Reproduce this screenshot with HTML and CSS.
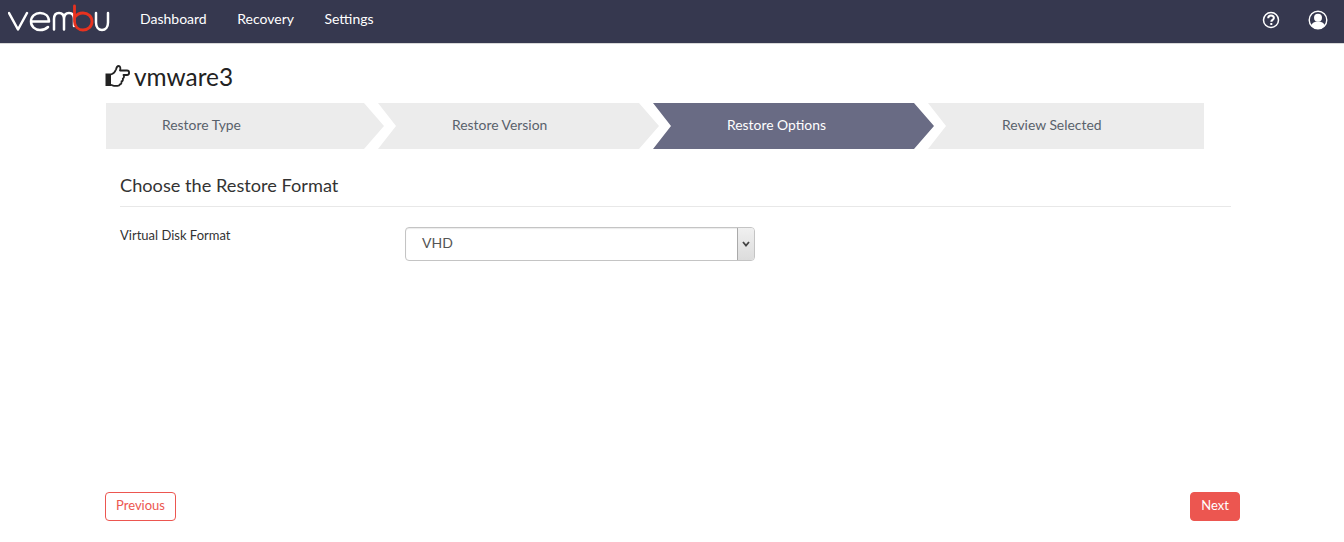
FILE: index.html
```html
<!DOCTYPE html>
<html lang="en">
<head>
<meta charset="utf-8">
<title>Restore Options</title>
<link rel="stylesheet" href="styles.css">
</head>
<body>
<header class="topbar">
  <svg class="logo" width="102" height="32" viewBox="0 0 102 32" fill="none" stroke-linecap="round" stroke-linejoin="round">
    <path d="M1 9 L10 25.500 L19 9" stroke="#fff" stroke-width="2.500"/>
    <path d="M23 17.500 H41 C41 12 37 9 32 9 C27 9 23 12.500 23 17.500 C23 22.500 27 26 32 26 C35.500 26 38 25 40 23" stroke="#fff" stroke-width="2.500"/>
    <path d="M46 25.500 V15 C46 11 48 9 51 9 C54 9 56 11 56 15 V25.500 M56 15 C56 11 58 9 61 9 C64 9 66 11 66 15 V22" stroke="#fff" stroke-width="2.500"/>
    <path d="M66.500 2 V17.500 C66.500 22.500 70 26 75 26 C80 26 84 22.500 84 17.500 C84 12.500 80 9 75 9 C71.500 9 68.500 10.500 66.500 13.500" stroke="#e8321f" stroke-width="2.800"/>
    <path d="M88 9 V18.500 C88 23 90.500 26 94 26 C97.500 26 100 23 100 18.500 V9" stroke="#fff" stroke-width="2.500"/>
  </svg>
  <nav class="nav">
    <a class="nav-link">Dashboard</a>
    <a class="nav-link">Recovery</a>
    <a class="nav-link">Settings</a>
  </nav>
  <div class="top-icons">
    <svg class="icon-help" width="18" height="18" viewBox="0 0 18 18" fill="none">
      <circle cx="9" cy="9" r="7.500" stroke="#fff" stroke-width="1.500"/>
      <path d="M6.200 7.200 C6.200 5.400 7.500 4.500 9 4.500 C10.700 4.500 11.900 5.500 11.900 7 C11.900 8.800 9.300 9 9.300 10.800" stroke="#fff" stroke-width="2"/>
      <rect x="8.300" y="12" width="2" height="2" fill="#fff"/>
    </svg>
    <svg class="icon-user" width="20" height="20" viewBox="0 0 20 20" fill="none">
      <circle cx="10" cy="10" r="8.800" stroke="#fff" stroke-width="1.400"/>
      <circle cx="10" cy="7.800" r="4" fill="#fff"/>
      <path d="M3.200 15.500 C4 12.800 6.500 11.500 10 11.500 C13.500 11.500 16 12.800 16.800 15.500 C15 18 12.500 19 10 19 C7.500 19 5 18 3.200 15.500 Z" fill="#fff"/>
    </svg>
  </div>
</header>
<main class="page">
  <h1 class="title">
    <svg class="hand" width="25" height="22" viewBox="0 0 25 22" fill="none">
      <path d="M0.500 8.500 H6 V21 H0.500 Z" fill="#222"/>
      <path d="M6 9.500 C8 9 10 7 11 4.500 C11.500 2.500 12 1 13.500 1 C15.300 1 15.800 3 15 5.500 H22 C24.800 5.500 24.800 10 22 10 H18.500 C19.500 11.500 19 13 17.800 13.500 C18.300 15 17.500 16.300 16.500 16.500 C16.800 18 16 19.300 14.800 19.500 C14.500 20.500 13.500 20.800 12.500 20.800 H9 C7.500 20.800 7 19.800 6 19.800" stroke="#222" stroke-width="1.800" stroke-linejoin="round"/>
    </svg>
    <span>vmware3</span>
  </h1>
  <ol class="steps">
    <li class="step step-first">Restore Type</li>
    <li class="step">Restore Version</li>
    <li class="step step-active">Restore Options</li>
    <li class="step step-last">Review Selected</li>
  </ol>
  <section class="panel">
    <h2 class="panel-title">Choose the Restore Format</h2>
    <div class="field">
      <label class="field-label">Virtual Disk Format</label>
      <div class="select">
        <span class="select-value">VHD</span>
        <span class="select-btn">
          <svg width="8" height="6" viewBox="0 0 8 6" fill="none"><path d="M1 1 L4 4.500 L7 1" stroke="#444" stroke-width="1.800"/></svg>
        </span>
      </div>
    </div>
  </section>
  <footer class="actions">
    <button class="btn btn-outline">Previous</button>
    <button class="btn btn-solid">Next</button>
  </footer>
</main>
</body>
</html>
```
FILE: styles.css
```css
* { box-sizing: border-box; }
html, body { margin: 0; height: 100%; }
body {
  font-family: Lato, "Liberation Sans", sans-serif;
  background: #fff;
  color: #333;
  overflow: hidden;
}
.topbar {
  display: flex;
  align-items: center;
  height: 44px;
  background: #36384f;
  border-bottom: 1px solid #d8d8d8;
  padding: 0 16px 0 8px;
}
.logo { flex: none; margin-top: -4px; }
.nav { display: flex; gap: 30.500px; margin-left: 30px; }
.nav-link { color: #fff; font-size: 14px; line-height: 20px; margin-top: -6px; }
.top-icons { display: flex; align-items: center; gap: 28px; margin-left: auto; margin-top: -4px; }
.page { padding: 0 104px 0 105px; }
.title {
  display: flex;
  align-items: center;
  gap: 4px;
  height: 36px;
  margin: 14px 0 9px;
  font-size: 24.400px;
  font-weight: 400;
  color: #222;
}
.hand { flex: none; }
.steps {
  display: flex;
  list-style: none;
  margin: 0 0 0 1px;
  padding: 0;
  width: 1098px;
}
.step {
  width: 281px;
  height: 46px;
  margin-right: -6px;
  padding-left: 74px;
  background: #ececec;
  color: #59616b;
  font-size: 13.900px;
  line-height: 44px;
  clip-path: polygon(0 0, 261px 0, 100% 50%, 261px 100%, 0 100%, 18px 50%);
}
.step-first {
  width: 278px;
  padding-left: 56px;
  clip-path: polygon(0 0, 258px 0, 100% 50%, 258px 100%, 0 100%);
}
.step-active { background: #696b84; color: #fff; }
.step-last {
  width: 276px;
  margin-right: 0;
  clip-path: polygon(0 0, 100% 0, 100% 100%, 0 100%, 18px 50%);
}
.panel { margin: 0 9px 0 15px; }
.panel-title {
  margin: 0;
  height: 58px;
  padding-top: 25px;
  font-size: 18.200px;
  line-height: 22px;
  font-weight: 400;
  color: #333;
  border-bottom: 1px solid #e8e8e8;
}
.field { display: flex; align-items: flex-start; margin-top: 20px; }
.field-label { width: 285px; font-size: 13px; line-height: 16px; color: #333; }
.select {
  display: flex;
  justify-content: space-between;
  width: 350px;
  height: 34px;
  border: 1px solid #c4c4c4;
  border-radius: 4px;
  box-shadow: inset 0 1px 1px rgba(0,0,0,.08);
  overflow: hidden;
}
.select-value { padding-left: 16px; font-size: 14px; line-height: 29px; color: #555; letter-spacing: .1px; }
.select-btn {
  display: flex;
  align-items: center;
  justify-content: center;
  width: 17px;
  background: linear-gradient(#f0f0f0, #dcdcdc);
  border-left: 1px solid #aaa;
}
.actions {
  display: flex;
  justify-content: space-between;
  margin-top: 231px;
}
.btn {
  height: 29px;
  padding: 0 0 2px;
  border-radius: 4px;
  border: 1px solid #ec5650;
  font-family: inherit;
  font-size: 13px;
  line-height: 23px;
}
.btn-outline { width: 71px; background: #fff; color: #ec5650; }
.btn-solid { width: 50px; background: #ec5650; color: #fff; }
```
